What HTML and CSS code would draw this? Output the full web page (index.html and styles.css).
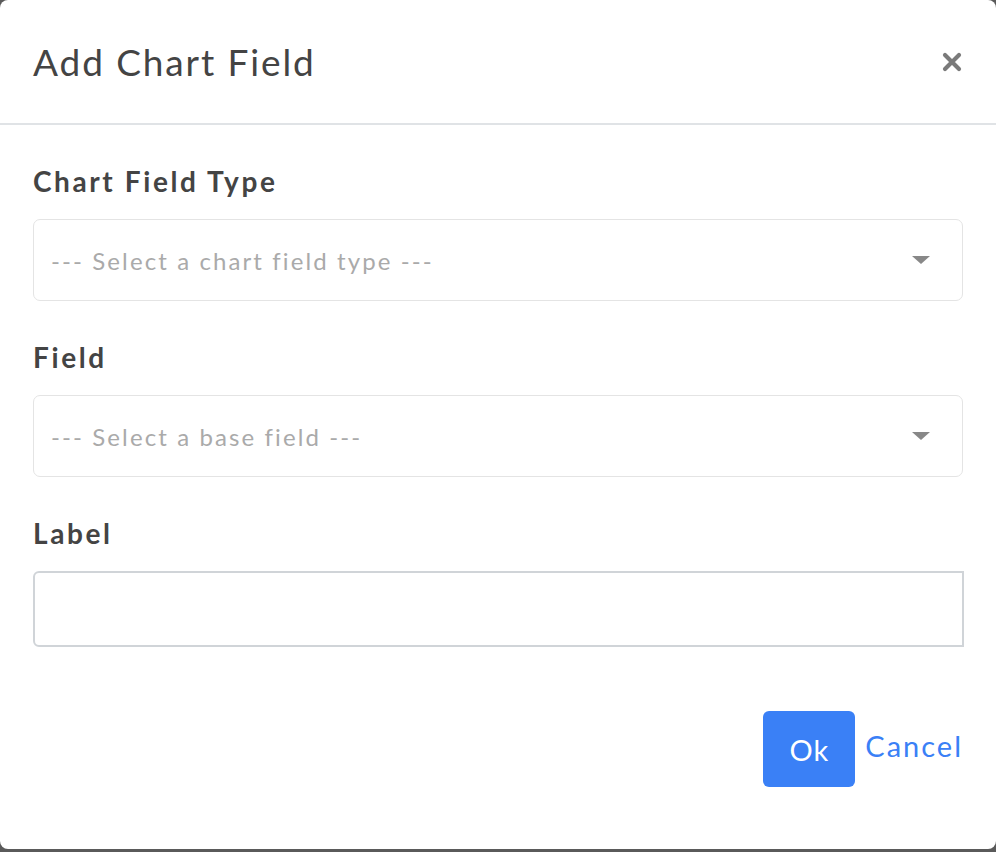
FILE: index.html
```html
<!DOCTYPE html>
<html lang="en">
<head>
  <meta charset="UTF-8">
  <title>Add Chart Field</title>
  <meta name="viewport" content="width=device-width, initial-scale=1.0" />
  <link rel="stylesheet" href="styles.css">
</head>
<body>

  <div class="modal">
    <div class="modal-header">
      <h1 class="modal-title">Add Chart Field</h1>
      <button class="close" type="button" aria-label="Close">
        <svg width="20" height="20" viewBox="0 0 20 20">
          <path d="M3 3 L17 17 M17 3 L3 17" stroke="#7a7a7a" stroke-width="4.2" stroke-linecap="round" fill="none"/>
        </svg>
      </button>
    </div>

    <div class="modal-body">
      <div class="form-group">
        <label class="field-label">Chart Field Type</label>
        <div class="select-box">
          <span class="placeholder">--- Select a chart field type ---</span>
          <span class="caret"></span>
        </div>
      </div>

      <div class="form-group">
        <label class="field-label">Field</label>
        <div class="select-box">
          <span class="placeholder">--- Select a base field ---</span>
          <span class="caret"></span>
        </div>
      </div>

      <div class="form-group">
        <label class="field-label">Label</label>
        <input class="text-input" type="text">
      </div>
    </div>

    <div class="modal-footer">
      <button class="btn-ok" type="button">Ok</button>
      <a class="cancel" href="#">Cancel</a>
    </div>
  </div>

</body>
</html>
```

FILE: styles.css
```css
body {
  margin: 0;
  background-color: #5a5a5a;
  font-family: Lato, "Noto Sans", sans-serif;
  color: #444;
}
.modal {
  background: white;
  width: 996px;
  height: 849px;
  border-radius: 8px;
  display: flex;
  flex-direction: column;
}
.modal-header {
  height: 123px;
  padding: 0 33px;
  display: flex;
  align-items: center;
  justify-content: space-between;
  border-bottom: 2px solid #e0e3e6;
}
.modal-title {
  margin: 0;
  font-size: 37px;
  font-weight: normal;
  color: #444;
  letter-spacing: 1.9px;
}
.close {
  border: none;
  background: none;
  padding: 0;
  width: 20px;
  height: 20px;
  margin-right: 1px;
  cursor: pointer;
}
.modal-body {
  padding: 38px 33px 0;
}
.form-group {
  margin-bottom: 38px;
}
.field-label {
  display: block;
  font-size: 28px;
  font-weight: bold;
  line-height: 36px;
  color: #444;
  letter-spacing: 2.6px;
  margin-bottom: 20px;
}
.select-box {
  box-sizing: border-box;
  height: 82px;
  border: 1px solid #e4e4e4;
  border-radius: 7px;
  display: flex;
  align-items: center;
  justify-content: space-between;
  padding: 0 32px 0 17px;
}
.placeholder {
  font-size: 24px;
  color: #aaa;
  letter-spacing: 2.1px;
}
.caret {
  width: 0;
  height: 0;
  border-left: 9px solid transparent;
  border-right: 9px solid transparent;
  border-top: 8px solid #888;
}
.text-input {
  display: block;
  box-sizing: border-box;
  width: 931px;
  height: 76px;
  border: 2px solid #d0d4d8;
  border-radius: 6px 0 0 6px;
  margin: 0;
  font-size: 24px;
  font-family: inherit;
  outline: none;
}
.modal-footer {
  display: flex;
  justify-content: flex-end;
  align-items: center;
  gap: 10px;
  padding: 26px 33px 0;
}
.btn-ok {
  width: 92px;
  height: 76px;
  background-color: #3a80f6;
  color: white;
  border: none;
  border-radius: 6px;
  font-family: inherit;
  font-size: 29px;
  letter-spacing: 1px;
  cursor: pointer;
}
.cancel {
  color: #3a80f6;
  font-size: 29px;
  letter-spacing: 2px;
  text-decoration: none;
  margin-bottom: 8px;
}
```
